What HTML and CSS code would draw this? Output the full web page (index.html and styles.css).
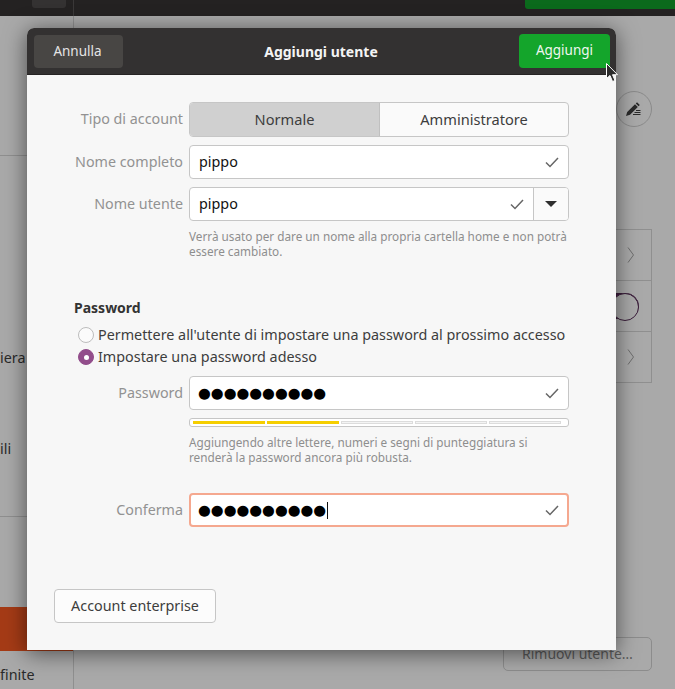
FILE: index.html
```html
<!DOCTYPE html>
<html lang="it">
<head>
<meta charset="utf-8">
<title>Aggiungi utente</title>
<link rel="stylesheet" href="styles.css">
</head>
<body>
<div class="backdrop">
  <div class="topbar">
    <div class="top-left"><span class="top-btn"></span></div>
    <div class="top-right"><span class="top-green"></span></div>
  </div>
  <div class="under">
    <aside class="sidebar">
      <div class="side-row side-first"></div>
      <div class="side-text side-iera">iera</div>
      <div class="side-text side-ili">ili</div>
      <div class="side-line"></div>
      <div class="side-orange"></div>
      <div class="side-text side-finite">finite</div>
    </aside>
    <main class="panel">
      <div class="edit-circle">
        <svg width="18" height="16" viewBox="0 0 18 16"><path d="M1 15l1.200-4 7.800-7.800 2.800 2.800-7.800 7.800zM10.800 2.400l1.200-1.200 2.800 2.800-1.200 1.200z" fill="#2a2a2a"/><path d="M11 9.500h4.500M9.500 11.500h6M8 13.500h7.500" stroke="#2a2a2a" stroke-width="1"/></svg>
      </div>
      <div class="list-box">
        <div class="list-row"><svg width="8" height="16" viewBox="0 0 8 16"><path d="M1 .5l5.500 7.500-5.500 7.500" fill="none" stroke="#6e6e6e"/></svg></div>
        <div class="list-row list-toggle"><span class="toggle"></span></div>
        <div class="list-row"><svg width="8" height="16" viewBox="0 0 8 16"><path d="M1 .5l5.500 7.500-5.500 7.500" fill="none" stroke="#6e6e6e"/></svg></div>
      </div>
      <div class="remove-btn">Rimuovi utente…</div>
    </main>
  </div>
</div>

<section class="dialog">
  <header class="dialog-head">
    <div class="btn-cancel">Annulla</div>
    <div class="dialog-title">Aggiungi utente</div>
    <div class="btn-add">Aggiungi</div>
  </header>
  <div class="dialog-body">
    <div class="form">
      <div class="label">Tipo di account</div>
      <div class="segmented">
        <div class="seg seg-on">Normale</div>
        <div class="seg">Amministratore</div>
      </div>

      <div class="label">Nome completo</div>
      <div class="entry">
        <span class="entry-text">pippo</span>
        <svg class="check" width="14" height="11" viewBox="0 0 14 11"><path d="M1 5.500l4 4 8-8.500" fill="none" stroke="#666" stroke-width="1.500"/></svg>
      </div>

      <div class="label">Nome utente</div>
      <div class="combo">
        <div class="combo-main">
          <span class="entry-text">pippo</span>
          <svg class="check" width="14" height="11" viewBox="0 0 14 11"><path d="M1 5.500l4 4 8-8.500" fill="none" stroke="#666" stroke-width="1.500"/></svg>
        </div>
        <div class="combo-arrow"><span class="arrow-down"></span></div>
      </div>

      <div></div>
      <p class="hint hint-user">Verrà usato per dare un nome alla propria cartella home e non potrà essere cambiato.</p>
    </div>

    <h2 class="pw-heading">Password</h2>
    <div class="radio-group">
      <div class="radio-row">
        <span class="radio"></span>
        <span class="radio-text">Permettere all'utente di impostare una password al prossimo accesso</span>
      </div>
      <div class="radio-row">
        <span class="radio radio-on"></span>
        <span class="radio-text">Impostare una password adesso</span>
      </div>
    </div>

    <div class="form form-pw">
      <div class="label">Password</div>
      <div class="entry">
        <span class="dots">●●●●●●●●●●</span>
        <svg class="check" width="14" height="11" viewBox="0 0 14 11"><path d="M1 5.500l4 4 8-8.500" fill="none" stroke="#666" stroke-width="1.500"/></svg>
      </div>
      <div></div>
      <div class="meter">
        <span class="meter-seg meter-fill"></span>
        <span class="meter-seg meter-fill"></span>
        <span class="meter-seg"></span>
        <span class="meter-seg"></span>
        <span class="meter-seg"></span>
      </div>
      <div></div>
      <p class="hint hint-pw">Aggiungendo altre lettere, numeri e segni di punteggiatura si renderà la password ancora più robusta.</p>
      <div class="label label-confirm">Conferma</div>
      <div class="entry entry-focus">
        <span class="dots">●●●●●●●●●●</span><span class="caret"></span>
        <svg class="check" width="14" height="11" viewBox="0 0 14 11"><path d="M1 5.500l4 4 8-8.500" fill="none" stroke="#666" stroke-width="1.500"/></svg>
      </div>
    </div>

    <div class="btn-enterprise">Account enterprise</div>
  </div>
</section>

<svg class="cursor" width="13" height="20" viewBox="0 0 13 20"><path d="M.5.500v15l3.500-3 2.500 6 2.500-1-2.500-5.800h5z" fill="#2b2b2b" stroke="#fff"/></svg>
</body>
</html>
```
FILE: styles.css
```css
* { box-sizing: border-box; }
html, body { margin: 0; padding: 0; }
body {
  width: 675px;
  height: 689px;
  overflow: hidden;
  position: relative;
  background: #a9a9a9;
  font-family: "Noto Sans", sans-serif;
  font-size: 14.35px;
  color: #3d3d3d;
}
.backdrop { display: flex; flex-direction: column; height: 689px; }
.topbar { display: flex; height: 16px; background: #242222; flex: none; }
.top-left { width: 74px; border-right: 1px solid #3a3838; padding-left: 32px; }
.top-btn { display: block; width: 34px; height: 8px; background: #343232; border-radius: 0 0 3px 3px; }
.top-right { flex: 1; display: flex; justify-content: flex-end; }
.top-green { display: block; width: 150px; height: 9px; background: #0b6a1c; border-radius: 0 0 0 3px; }
.under { flex: 1; display: flex; }
.sidebar { width: 74px; border-right: 1px solid #8f8f8f; display: flex; flex-direction: column; color: #2a2a2a; overflow: hidden; }
.side-row { height: 140px; border-bottom: 1px solid #8f8f8f; flex: none; }
.side-text { height: 20px; line-height: 20px; flex: none; }
.side-iera { margin-top: 192px; }
.side-ili { margin-top: 71px; }
.side-line { height: 1px; background: #8f8f8f; margin-top: 57px; flex: none; }
.side-orange { height: 44px; margin-top: 90px; background: #a53b16; flex: none; }
.side-finite { margin-top: 14px; }
.panel { flex: 1; display: flex; flex-direction: column; align-items: flex-end; padding-right: 23px; }
.edit-circle {
  width: 36px; height: 36px; border: 1px solid #8a8a8a; border-radius: 50%;
  margin-top: 75px;
  display: flex; align-items: center; justify-content: center;
}
.list-box { width: 150px; height: 154px; margin-top: 102px; border: 1px solid #8f8f8f; display: flex; flex-direction: column; }
.list-row { flex: 1; display: flex; align-items: center; justify-content: flex-end; padding-right: 16px; }
.list-row + .list-row { border-top: 1px solid #8f8f8f; }
.list-toggle { padding-right: 12px; }
.toggle { width: 50px; height: 26px; border-radius: 13px; border: 1px solid #3a1d3a; background: #3f1b41; position: relative; }
.toggle::after { content: ""; position: absolute; right: -1px; top: -1px; width: 26px; height: 26px; border-radius: 50%; background: #a9a9a9; border: 1px solid #3a1d3a; }
.remove-btn {
  width: 149px; height: 34px; margin-top: 254px;
  border: 1px solid #8c8c8c; border-radius: 5px;
  text-align: center; line-height: 32px; color: #5a5a5a; font-size: 14px;
}
.dialog {
  position: absolute; left: 27px; top: 28px; width: 589px; height: 622px;
  background: #f7f7f7; border-radius: 7px 7px 0 0;
  box-shadow: 0 3px 22px rgba(0,0,0,.55);
  display: flex; flex-direction: column;
}
.dialog-head {
  height: 47px; flex: none; background: #333131; border-radius: 7px 7px 0 0;
  display: flex; align-items: center; justify-content: space-between;
  padding: 6px 6px 6px 7px;
  border-bottom: 1px solid #262424;
  color: #f4f4f4;
}
.btn-cancel { width: 89px; height: 33px; background: #484644; border-radius: 4px; text-align: center; line-height: 32px; color: #e4e4e4; font-size: 13.5px; padding-right: 2px; }
.dialog-title { font-weight: 700; color: #f4f4f4; font-size: 14px; }
.btn-add { width: 91px; height: 34px; background: #14a52b; border-radius: 4px; text-align: center; line-height: 33px; color: #f0f6f0; font-size: 13.5px; }
.dialog-body { flex: 1; display: flex; flex-direction: column; padding: 27px 47px 27px 27px; }
.form { display: grid; grid-template-columns: 129px 380px; column-gap: 6px; row-gap: 8px; align-items: center; }
.label { text-align: right; color: #929292; line-height: 20px; white-space: nowrap; font-size: 14.3px; padding-bottom: 1px; }
.segmented { display: flex; height: 35px; border: 1px solid #c6c6c6; border-radius: 4px; background: #fafafa; overflow: hidden; font-size: 14.6px; }
.seg { flex: 1; text-align: center; line-height: 33px; }
.seg-on { flex: none; width: 190px; background: #d0d0d0; border-right: 1px solid #c0c0c0; }
.entry { height: 34px; border: 1px solid #c6c6c6; border-radius: 4px; background: #fff; display: flex; align-items: center; padding: 0 9px; }
.entry-text { color: #111; flex: 1; padding-bottom: 2px; }
.check { flex: none; margin-left: auto; }
.combo { display: flex; height: 34px; border: 1px solid #c6c6c6; border-radius: 4px; background: #fff; overflow: hidden; }
.combo-main { flex: 1; display: flex; align-items: center; padding: 0 9px; }
.combo-arrow { width: 35px; border-left: 1px solid #c6c6c6; background: #fafafa; display: flex; align-items: center; justify-content: center; }
.arrow-down { width: 0; height: 0; border-left: 6px solid transparent; border-right: 6px solid transparent; border-top: 6px solid #2e2e2e; }
.hint { margin: 0; font-size: 11.75px; line-height: 15px; color: #8e8e8e; }
.hint-user { height: 30px; }
.pw-heading { margin: 39px 0 0 20px; font-size: 14px; font-weight: 700; line-height: 20px; color: #333; }
.radio-group { margin-top: 6px; margin-left: 24px; }
.radio-row { display: flex; align-items: center; gap: 4px; height: 22px; white-space: nowrap; }
.radio-text { padding-bottom: 2px; }
.radio { width: 16px; height: 16px; border-radius: 50%; border: 1px solid #bdbdbd; background: #fbfbfb; flex: none; }
.radio-on { background: #924d8b; border-color: #924d8b; position: relative; }
.radio-on::after { content: ""; position: absolute; left: 4.500px; top: 4.500px; width: 5px; height: 5px; border-radius: 50%; background: #fff; }
.form-pw { margin-top: 8px; row-gap: 0; }
.form-pw .meter { margin-top: 8px; }
.form-pw .hint-pw { margin-top: 8px; height: 30px; }
.dots { font-family: "DejaVu Sans", sans-serif; font-size: 14.7px; color: #000; line-height: 20px; padding-bottom: 1px; margin-left: -1px; }
.caret { width: 1px; height: 17px; background: #111; margin-left: 1px; }
.meter { height: 9px; border: 1px solid #c6c6c6; border-radius: 3px; background: #fff; display: flex; gap: 2px; padding: 2px 7px 2px 3px; }
.meter-seg { flex: 1; background: #f4f4f4; border: 1px solid #dcdcdc; }
.meter-fill { background: #f5ce00; border-color: #f5ce00; }
.entry-focus { border: 2px solid #f5a88f; padding: 0 8px; margin-top: 28px; }
.label-confirm { margin-top: 28px; }
.btn-enterprise {
  margin-top: auto; width: 162px; height: 34px; background: #fcfcfc;
  border: 1px solid #c6c6c6; border-radius: 4px; text-align: center; line-height: 32px;
}
.cursor { position: absolute; left: 606px; top: 63px; }
```
